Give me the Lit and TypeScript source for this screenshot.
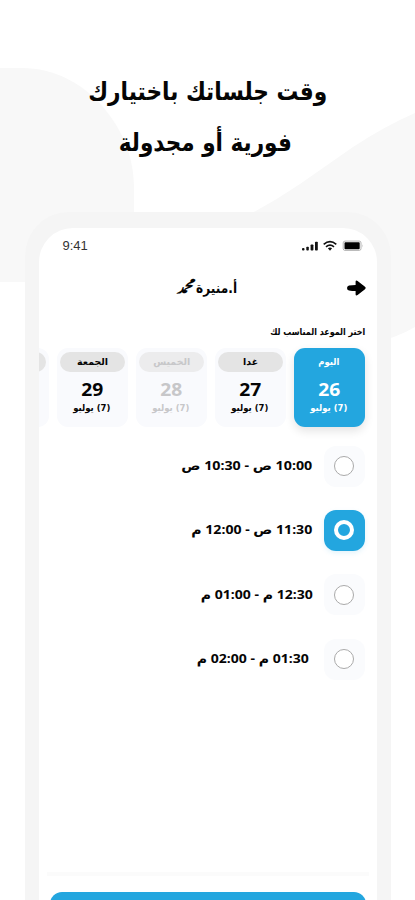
import { LitElement, html, svg, css } from "lit";
import { customElement, property, state } from "lit/decorators.js";
import { classMap } from "lit/directives/class-map.js";
import { styleMap } from "lit/directives/style-map.js";

/** A single line of text, condensed or widened to a given width. */
@customElement("fit-text")
class FitText extends LitElement {
  @property({ type: Number }) width = 0;
  @state() private ratio = 1;

  static styles = css`
    :host { display: flex; justify-content: center; white-space: nowrap; }
    .line { display: block; flex: none; }
  `;

  firstUpdated() {
    const line = this.renderRoot.querySelector(".line") as HTMLElement;
    if (line.offsetWidth) this.ratio = this.width / line.getBoundingClientRect().width;
  }

  render() {
    this.style.width = `${this.width}px`;
    return html`<span class="line" style=${styleMap({ transform: `scaleX(${this.ratio})` })}><slot></slot></span>`;
  }
}

interface Day { name: string; nameWidth: number; date: string; active?: boolean; muted?: boolean; }
interface Slot { label: string; width: number; inset?: number; }

@customElement("app-root")
class AppRoot extends LitElement {
  @state() private selected = 1;

  private days: Day[] = [
    { name: "اليوم", nameWidth: 21, date: "26", active: true },
    { name: "غدا", nameWidth: 15, date: "27" },
    { name: "الخميس", nameWidth: 37, date: "28", muted: true },
    { name: "الجمعة", nameWidth: 31, date: "29" },
  ];

  private slots: Slot[] = [
    { label: "10:00 ص - 10:30 ص", width: 131 },
    { label: "11:30 ص - 12:00 م", width: 121 },
    { label: "12:30 م - 01:00 م", width: 112 },
    { label: "01:30 م - 02:00 م", width: 112, inset: 4 },
  ];

  static styles = css`
    * { box-sizing: border-box; }
    :host {
      display: block; position: relative; width: 415px; height: 900px; overflow: hidden;
      background: #fff; color: #050505;
      font-family: "Noto Sans", "DejaVu Sans", sans-serif;
    }
    .backdrop { position: absolute; inset: 0; }
    .page { position: relative; direction: rtl; display: flex; flex-direction: column; align-items: center; height: 900px; }
    h1 {
      margin: 0; height: 212px; padding-top: 66px; width: 100%; flex: none;
      display: flex; flex-direction: column; align-items: center;
      font: 700 25px/51px "DejaVu Sans", sans-serif;
    }
    .second { margin-right: 5px; }
    .phone {
      width: 366px; height: 688px; flex: none; padding: 16px 14px 0; border-radius: 44px 44px 0 0;
      background: #f5f5f5;
    }
    .screen { height: 100%; border-radius: 34px 34px 0 0; background: #fff; overflow: hidden; display: flex; flex-direction: column; }
    .status { direction: ltr; display: flex; justify-content: space-between; align-items: center; flex: none; height: 34px; padding: 1px 14px 0 24px; font: 13px/34px "Liberation Sans", sans-serif; color: #333; }
    .bar { display: flex; align-items: center; flex: none; height: 51px; padding: 0 11px; }
    .arrow { margin-left: 109px; }
    .name { display: flex; gap: 2px; font: 700 14px/20px "DejaVu Sans", sans-serif; }
    .hint { flex: none; height: 35px; padding: 9px 11px 0; font: 700 9.5px/20px "DejaVu Sans", sans-serif; display: flex; }
    .days { display: flex; gap: 7.5px; padding: 0 11.5px; height: 79px; flex: none; }
    .day { flex: none; width: 71.5px; height: 79px; padding: 4px 3px; border-radius: 11px; background: #f9fafd; display: flex; flex-direction: column; align-items: center; }
    .day.active { background: #23a6df; color: #fff; box-shadow: 0 4px 10px #0000001c; }
    .day.muted { color: #c7c7c9; }
    .pill { width: 65.5px; height: 20px; border-radius: 10px; background: #e4e4e4; display: flex; justify-content: center; font: 700 9.5px/19px "DejaVu Sans", sans-serif; }
    .active .pill { background: none; }
    .muted .pill { background: #ececed; }
    .num { margin-top: 5px; font: 700 18px/24px "Noto Sans", sans-serif; }
    .month { font: 700 9.5px/13px "DejaVu Sans", sans-serif; }
    .slots { display: flex; flex-direction: column; flex: none; gap: 22.4px; padding: 18px 12px 0; }
    .slot { display: flex; align-items: center; gap: 11px; height: 42px; }
    .box { width: 41px; height: 41px; border-radius: 12px; background: #fafbfd; display: flex; align-items: center; justify-content: center; }
    .ring { width: 20px; height: 20px; border-radius: 50%; border: 1px solid #aaa; background: #fff; }
    .on .box { background: #23a6df; box-shadow: 0 2px 5px #23a6df22; }
    .on .ring { border: 4px solid #fff; background: none; }
    .time { position: relative; top: -1px; font: 700 13px/20px "Noto Sans", "DejaVu Sans", sans-serif; }
    .inset { margin-right: 4px; }
    .footer { margin: auto 8px 0; height: 28px; border-top: 4px solid #fbfbfb; padding: 16px 3px 0; flex: none; }
    .cta { height: 30px; border-radius: 12px; background: #23a6df; }
  `;

  private statusIcons() {
    return svg`<svg width="61" height="12" viewBox="0 0 61 12">
      <g fill="#111"><rect x="0" y="8" width="2.5" height="2.6" rx="1"/><rect x="4.3" y="6.8" width="2.5" height="3.8" rx=".8"/><rect x="8.6" y="4.5" width="2.8" height="6.1" rx=".8"/><rect x="13" y="1.8" width="2.8" height="8.8" rx=".8"/></g>
      <g fill="none" stroke="#111" stroke-width="1.7"><path d="M21.7 4.3Q28 -.9 34.3 4.3"/><path d="M24 6.8Q28 3.4 32 6.8"/></g><path d="M25.9 8.3Q28 6.9 30.1 8.3L28 10.7Z" fill="#111"/>
      <rect x="41.2" y="1.1" width="17.8" height="9.3" rx="1.8" fill="#fff" stroke="#aaa" stroke-width=".9"/><rect x="42.5" y="2.2" width="15.2" height="7" rx=".9"/><path d="M60 4.2Q61 5.8 60 7.4Z" fill="#aaa"/>
    </svg>`;
  }

  render() {
    return html`
      <svg class="backdrop" width="415" height="900" viewBox="0 0 415 900">
        <path fill="#f8f8f8" d="M0 68H22C54 68 82 83 103 107C124 132 134 158 134 190V282H0Z"/>
        <path fill="#f8f8f8" d="M415 113Q385 126 353 147L300 184Q275 201 250 214V260L370 345Q400 336 415 327Z"/>
      </svg>
      <div class="page">
        <h1>
          <fit-text .width=${239}>وقت جلساتك باختيارك</fit-text>
          <fit-text class="second" .width=${173}>فورية أو مجدولة</fit-text>
        </h1>
        <div class="phone">
          <div class="screen">
            <div class="status"><span>9:41</span>${this.statusIcons()}</div>
            <div class="bar">
              <svg class="arrow" width="19" height="16" viewBox="0 0 19 16"><path d="M2 5.4Q5 4.9 8.6 4.9V1.6Q8.8-.2 10.6.9L18 6.8Q19.3 8 18 9.2L10.6 15.1Q8.8 16.2 8.6 14.4V11.1Q5 11.1 2 10.6Q0 10 0 8T2 5.4Z"/></svg>
              <div class="name">
                <fit-text .width=${41}>أ.منيرة</fit-text>
                <fit-text .width=${19}>ﷴ</fit-text>
              </div>
            </div>
            <div class="hint"><fit-text .width=${95}>اختر الموعد المناسب لك</fit-text></div>
            <div class="days">
              ${this.days.map(d => html`
                <div class=${classMap({ day: true, active: !!d.active, muted: !!d.muted })}>
                  <div class="pill"><fit-text .width=${d.nameWidth}>${d.name}</fit-text></div>
                  <fit-text class="num" .width=${22}>${d.date}</fit-text>
                  <fit-text class="month" .width=${37}>(7) يوليو</fit-text>
                </div>`)}
              <div class="day"><div class="pill"></div></div>
            </div>
            <div class="slots">
              ${this.slots.map((s, i) => html`
                <div class=${classMap({ slot: true, on: i === this.selected })} @click=${() => (this.selected = i)}>
                  <div class="box"><div class="ring"></div></div>
                  <fit-text class=${classMap({ time: true, inset: !!s.inset })} .width=${s.width}>${s.label}</fit-text>
                </div>`)}
            </div>
            <div class="footer"><div class="cta"></div></div>
          </div>
        </div>
      </div>`;
  }
}
